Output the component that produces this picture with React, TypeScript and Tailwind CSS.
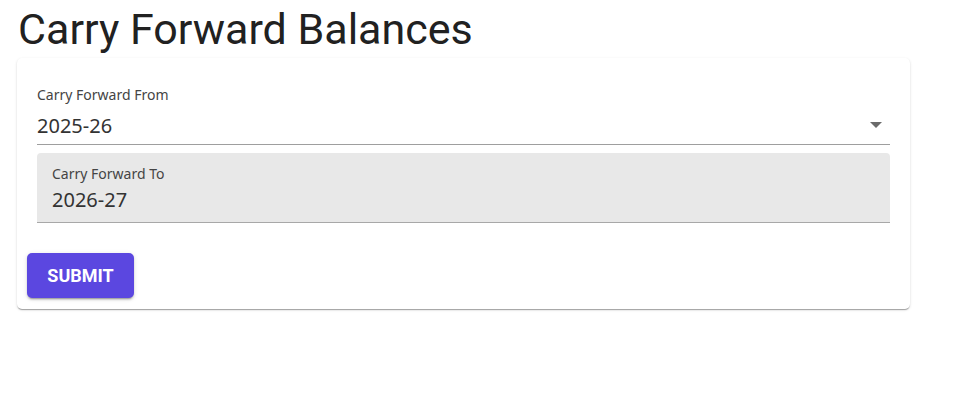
import React from "react";

export default function App() {
  return (
    <div className="w-[975px] h-[405px] bg-white">
      <div className="pl-[17px] pr-[65px]">
        <h1
          className="text-[43px] leading-[58px] text-[#212121] pl-px"
          style={{ fontFamily: "Roboto, sans-serif" }}
        >
          Carry Forward Balances
        </h1>
        <div className="bg-white rounded-[5px] shadow-[0_2px_1px_-1px_rgba(0,0,0,0.2),0_1px_1px_0_rgba(0,0,0,0.14),0_1px_3px_0_rgba(0,0,0,0.12)] h-[251px] pt-[27px] px-[10px]">
          <div className="px-[10px]" style={{ fontFamily: '"Noto Sans", sans-serif' }}>
            <div className="text-[14px] leading-[20px] text-[#444]">Carry Forward From</div>
            <div className="relative border-b border-[#9e9e9e] h-[40px] flex items-center pt-[3px]">
              <span className="text-[20px] text-[#333]">2025-26</span>
              <svg className="absolute right-[7px] top-[16px]" width="14" height="8" viewBox="0 0 14 8">
                <path d="M1 1 L13 1 L7 7 Z" fill="#6b6b6b" />
              </svg>
            </div>
            <div className="mt-[8px] bg-[#e8e8e8] rounded-t-[4px] border-b border-[#a8a8a8] h-[70px] px-[15px] pt-[12px]">
              <div className="text-[14px] leading-[18px] text-[#444]">Carry Forward To</div>
              <div className="text-[20px] leading-[34px] text-[#333]">2026-27</div>
            </div>
          </div>
          <button
            className="mt-[30px] w-[107px] h-[45px] rounded-[5px] bg-[#5b47e0] text-white font-bold text-[18px] shadow-[0_3px_1px_-2px_rgba(0,0,0,0.2),0_2px_2px_0_rgba(0,0,0,0.14),0_1px_5px_0_rgba(0,0,0,0.12)]"
            style={{ fontFamily: "Roboto, sans-serif" }}
          >
            SUBMIT
          </button>
        </div>
      </div>
    </div>
  );
}
